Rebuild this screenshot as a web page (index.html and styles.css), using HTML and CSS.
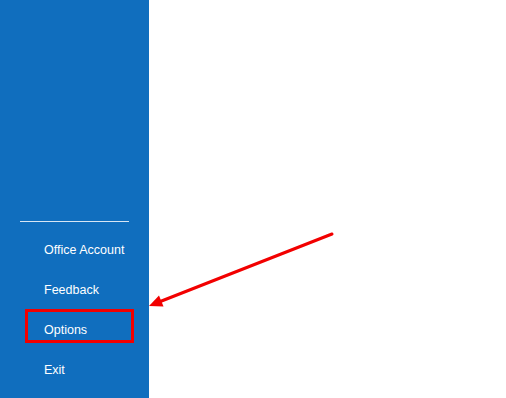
FILE: index.html
```html
<!doctype html>
<html>
<head>
	<title>Backstage</title>
	<meta charset="utf-8" />
	<link rel="stylesheet" href="styles.css">
</head>
	<body>
		<div class="page">
			<div class="sidebar">
				<hr class="divider" />
				<a class="item" href="#">Office Account</a>
				<a class="item" href="#">Feedback</a>
				<a class="item options" href="#">Options<span class="highlight"></span></a>
				<a class="item" href="#">Exit</a>
			</div>
			<div class="main"></div>
			<svg class="arrow" width="506" height="398" viewBox="0 0 506 398">
				<line x1="332" y1="234" x2="159" y2="302" stroke="#f20000" stroke-width="3" stroke-linecap="round" />
				<polygon points="149,306 163.5,306.5 159,295.5" fill="#f20000" />
			</svg>
		</div>
	</body>
</html>
```

FILE: styles.css
```css
html, body {
	margin: 0;
	padding: 0;
	background-color: #fff;
	font-family: "Segoe UI", "Liberation Sans", Arial, sans-serif;
}

.page {
	position: relative;
	display: flex;
	width: 506px;
	height: 398px;
	overflow: hidden;
}

.sidebar {
	width: 149px;
	background-color: #106ebe;
	display: flex;
	flex-direction: column;
	justify-content: flex-end;
	padding-bottom: 9px;
	box-sizing: border-box;
}

.divider {
	border: 0;
	border-top: 1px solid #d7e6f5;
	margin: 0 20px 7px 20px;
}

.item {
	position: relative;
	display: flex;
	align-items: center;
	height: 40px;
	padding: 2px 0 0 44px;
	box-sizing: border-box;
	color: #fff;
	font-size: 12.5px;
	text-decoration: none;
}

.highlight {
	position: absolute;
	left: 25px;
	top: 0;
	width: 109px;
	height: 34px;
	border: 3px solid #f20000;
	box-sizing: border-box;
}

.main {
	flex: 1;
}

.arrow {
	position: absolute;
	left: 0;
	top: 0;
}
```
